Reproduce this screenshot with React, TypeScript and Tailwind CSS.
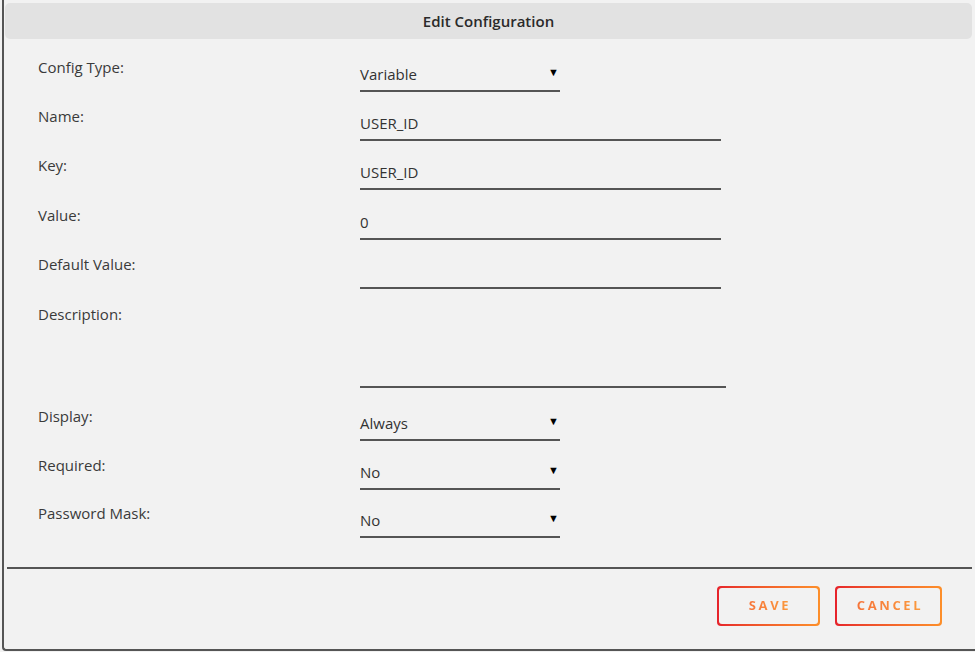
import React from "react";

const font = { fontFamily: '"Open Sans", "Noto Sans", sans-serif' };

function Row({ label, children, className = "" }: { label: string; children: React.ReactNode; className?: string }) {
  return (
    <div className={"flex " + className}>
      <div className="w-[322px] shrink-0 -mt-[2px] text-[15px] leading-[20px] text-[#3a3a3a]">{label}</div>
      {children}
    </div>
  );
}

function TextField({ value, w = "w-[361px]" }: { value: string; w?: string }) {
  return (
    <div className={w + " pt-[5px] pb-[6px] border-b-2 border-[#555] text-[15px] leading-[20px] text-[#333] h-[33px]"}>
      {value}
    </div>
  );
}

function SelectField({ value }: { value: string }) {
  return (
    <div className="w-[200px] pt-[5px] pb-[6px] border-b-2 border-[#555] text-[15px] leading-[20px] text-[#333] h-[33px] flex justify-between items-start">
      <span>{value}</span>
      <span className="text-[11px] leading-[16px] text-black mr-[1px]">▼</span>
    </div>
  );
}

function GradButton({ label, w }: { label: string; w: string }) {
  return (
    <div className={w + " h-[40px] rounded-[4px] p-[2px] bg-linear-to-r from-[#e6222b] to-[#fd8f2a]"}>
      <div className="w-full h-full rounded-[3px] bg-[#f2f2f2] flex items-center justify-center">
        <span className="text-[13px] font-bold tracking-[0.2em] bg-linear-to-r from-[#f6733a] to-[#fb9a3d] bg-clip-text text-transparent pl-[3px]">
          {label}
        </span>
      </div>
    </div>
  );
}

export default function App() {
  return (
    <div style={font} className="w-[975px] h-[652px] bg-[#f2f2f2] overflow-hidden">
      <div className="h-[651px] border-l-2 border-b-2 border-[#555] rounded-bl-[4px] ml-[2px] flex flex-col w-[980px]">
        <div className="mt-[3px] ml-[1px] w-[967px] h-[36px] rounded-[5px] bg-[#e2e2e2] flex items-center justify-center">
          <span className="text-[15px] font-semibold text-[#2a2a2a]">Edit Configuration</span>
        </div>
        <div className="pl-[34px] pt-[20px]">
          <Row label="Config Type:">
            <SelectField value="Variable" />
          </Row>
          <Row label="Name:" className="mt-[16px]">
            <TextField value="USER_ID" />
          </Row>
          <Row label="Key:" className="mt-[16px]">
            <TextField value="USER_ID" />
          </Row>
          <Row label="Value:" className="mt-[17px]">
            <TextField value="0" />
          </Row>
          <Row label="Default Value:" className="mt-[16px]">
            <TextField value="" />
          </Row>
          <Row label="Description:" className="mt-[17px]">
            <div className="w-[366px] h-[82px] border-b-2 border-[#555]"></div>
          </Row>
          <Row label="Display:" className="mt-[20px]">
            <SelectField value="Always" />
          </Row>
          <Row label="Required:" className="mt-[16px]">
            <SelectField value="No" />
          </Row>
          <Row label="Password Mask:" className="mt-[15px]">
            <SelectField value="No" />
          </Row>
        </div>
        <div className="mt-[29px] ml-[3px] w-[965px] h-[2px] bg-[#555]"></div>
        <div className="flex gap-[15px] ml-[713px] mt-[17px]">
          <GradButton label="SAVE" w="w-[103px]" />
          <GradButton label="CANCEL" w="w-[107px]" />
        </div>
      </div>
    </div>
  );
}
